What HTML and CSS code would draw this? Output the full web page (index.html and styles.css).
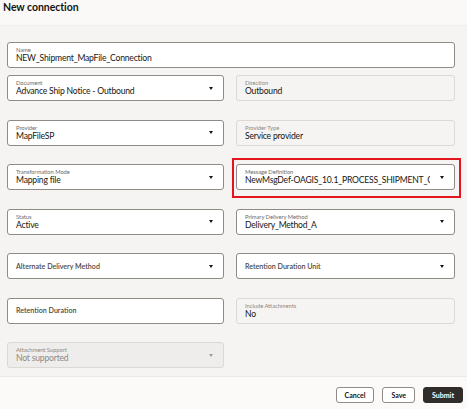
FILE: index.html
```html
<!DOCTYPE html>
<html lang="en">
<head>
<meta charset="utf-8">
<title>New connection</title>
<link rel="stylesheet" href="styles.css">
</head>
<body>
<div class="page">
  <header class="header"><h1 class="title">New connection</h1></header>
  <main class="form">
    <div class="field span2">
      <span class="label">Name</span>
      <span class="value">NEW_Shipment_MapFile_Connection</span>
    </div>
    <div class="grid">
      <div class="field select">
        <div class="text"><span class="label">Document</span><span class="value">Advance Ship Notice - Outbound</span></div>
        <span class="caret"></span>
      </div>
      <div class="field readonly">
        <div class="text"><span class="label">Direction</span><span class="value">Outbound</span></div>
      </div>

      <div class="field select">
        <div class="text"><span class="label">Provider</span><span class="value">MapFileSP</span></div>
        <span class="caret"></span>
      </div>
      <div class="field readonly">
        <div class="text"><span class="label">Provider Type</span><span class="value">Service provider</span></div>
      </div>

      <div class="field select">
        <div class="text"><span class="label">Transformation Mode</span><span class="value">Mapping file</span></div>
        <span class="caret"></span>
      </div>
      <div class="highlight">
        <div class="field select">
          <div class="text clip"><span class="label">Message Definition</span><span class="value">NewMsgDef-OAGIS_10.1_PROCESS_SHIPMENT_C</span></div>
          <span class="caret"></span>
        </div>
      </div>

      <div class="field select">
        <div class="text"><span class="label">Status</span><span class="value">Active</span></div>
        <span class="caret"></span>
      </div>
      <div class="field select">
        <div class="text"><span class="label">Primary Delivery Method</span><span class="value">Delivery_Method_A</span></div>
        <span class="caret"></span>
      </div>

      <div class="field select empty">
        <div class="text"><span class="placeholder">Alternate Delivery Method</span></div>
        <span class="caret"></span>
      </div>
      <div class="field select empty">
        <div class="text"><span class="placeholder">Retention Duration Unit</span></div>
        <span class="caret"></span>
      </div>

      <div class="field empty">
        <div class="text"><span class="placeholder">Retention Duration</span></div>
      </div>
      <div class="field readonly">
        <div class="text"><span class="label">Include Attachments</span><span class="value">No</span></div>
      </div>

      <div class="field select disabled">
        <div class="text"><span class="label">Attachment Support</span><span class="value">Not supported</span></div>
        <span class="caret"></span>
      </div>
    </div>
  </main>
  <footer class="footer">
    <button class="btn">Cancel</button>
    <button class="btn">Save</button>
    <button class="btn primary">Submit</button>
  </footer>
</div>
</body>
</html>
```

FILE: styles.css
```css
* { box-sizing: border-box; }
html, body { margin: 0; padding: 0; }
body {
  font-family: "Lato", "Noto Sans", sans-serif;
  background: #f5f4f2;
  color: #161513;
  width: 467px;
  height: 409px;
  overflow: hidden;
}
.page {
  display: flex;
  flex-direction: column;
  height: 409px;
}
.header {
  height: 26px;
  background: #faf9f8;
  border-bottom: 1px solid #efedea;
  padding: 2px 0 0 3px;
}
.title {
  margin: 0;
  font-size: 10.5px;
  font-weight: 700;
  line-height: 11px;
  letter-spacing: -0.05px;
  color: #161513;
}
.form {
  flex: 1;
  padding: 16px 12px 0 7px;
}
.grid {
  display: grid;
  grid-template-columns: 217px 219px;
  column-gap: 12px;
  row-gap: 18.5px;
}
.field {
  position: relative;
  height: 26px;
  background: #ffffff;
  border: 1px solid #8f8b86;
  border-radius: 3px;
  display: flex;
  align-items: center;
  padding: 0 10px 0 8px;
}
.field.span2 {
  flex-direction: column;
  align-items: flex-start;
  justify-content: center;
  margin-bottom: 7px;
}
.text {
  flex: 1;
  min-width: 0;
  display: flex;
  flex-direction: column;
  justify-content: center;
}
.text.clip { overflow: hidden; margin-right: 10px; }
.label {
  font-size: 5.8px;
  line-height: 7px;
  letter-spacing: -0.05px;
  color: #6f6b67;
  white-space: nowrap;
}
.value {
  font-size: 8.6px;
  line-height: 10.5px;
  letter-spacing: -0.2px;
  color: #161513;
  white-space: nowrap;
}
.placeholder {
  font-size: 7.1px;
  font-weight: 600;
  color: #4b4845;
  white-space: nowrap;
}
.caret {
  width: 0;
  height: 0;
  border-left: 2.5px solid transparent;
  border-right: 2.5px solid transparent;
  border-top: 3px solid #161513;
  flex: none;
}
.field.readonly {
  background: #f5f4f2;
  border-color: #dcd9d5;
}
.field.readonly .label { color: #8d8985; }
.field.disabled {
  background: #efedeb;
  border-color: #dcd9d5;
}
.field.disabled .label { color: #8d8985; }
.field.disabled .value { color: #8d8985; }
.field.disabled .caret { border-top-color: #a19d99; }
.highlight {
  position: relative;
}
.highlight::after {
  content: "";
  position: absolute;
  top: -6px;
  left: -4px;
  right: -6px;
  bottom: -8px;
  border: 2px solid #e3161d;
  pointer-events: none;
}
.footer {
  height: 33px;
  background: #fbfaf9;
  border-top: 1px solid #eceae7;
  display: flex;
  justify-content: flex-end;
  align-items: flex-start;
  gap: 8px;
  padding: 10px 4px 0 0;
}
.btn {
  font-family: inherit;
  height: 16px;
  padding: 0 8px;
  font-size: 7px;
  font-weight: 700;
  color: #161513;
  background: #ffffff;
  border: 1px solid #8f8b86;
  border-radius: 3px;
  line-height: 14px;
}
.btn.primary {
  background: #312d2a;
  border-color: #312d2a;
  color: #ffffff;
  padding: 0 8px;
}
```
